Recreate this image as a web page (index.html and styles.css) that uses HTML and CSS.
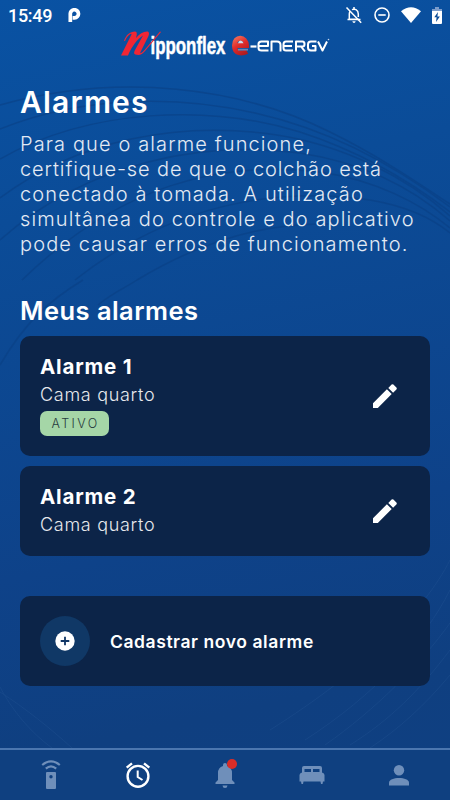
FILE: index.html
```html
<!DOCTYPE html>
<html lang="pt-BR">
<head>
  <meta charset="utf-8">
  <meta name="viewport" content="width=device-width, initial-scale=1">
  <title>Alarmes</title>
  <link rel="stylesheet" href="styles.css">
</head>
<body>
  <div class="app">
    <svg class="waves" viewBox="0 0 450 800" fill="none" aria-hidden="true">
      <g class="waves-dark">
        <path d="M0 105C120 72 240 87 330 132C385 159 425 188 450 204"/>
        <path d="M0 129C90 93 185 97 255 113C335 131 400 169 450 207"/>
        <path d="M0 159C90 108 210 104 300 132C365 153 415 185 450 212"/>
        <path d="M0 198C80 138 180 122 270 134C345 144 410 180 450 216"/>
        <path d="M0 240C90 160 205 141 300 153C365 163 415 190 450 221"/>
        <path d="M22 280C120 185 220 160 320 172C375 180 420 203 450 228"/>
        <path d="M75 280C170 205 275 186 370 200C405 206 432 218 450 233"/>
        <path d="M137 280C195 245 260 222 330 224"/>
        <path d="M0 365C25 322 50 300 83 280"/>
        <path d="M98 305C112 293 125 288 137 280"/>
      </g>
      <g class="waves-light">
        <path d="M450 560C425 610 365 670 270 730"/>
        <path d="M450 590C425 640 375 695 305 740"/>
        <path d="M450 623C420 665 375 710 325 745"/>
        <path d="M450 650C420 690 390 720 350 745"/>
        <path d="M450 675C425 705 400 728 370 748"/>
        <path d="M0 687C12 710 30 732 52 748"/>
        <path d="M0 692C25 708 50 728 72 748"/>
      </g>
    </svg>

    <header class="status-bar">
      <span class="clock">15:49</span>
      <svg class="pay" viewBox="0 0 14 16"><path d="M2.5 15V6.700A4.400 4.400 0 1 1 7 10.600H5" fill="none" stroke="#fff" stroke-width="4"/></svg>
      <div class="status-icons">
        <svg width="18" height="20" viewBox="0 0 18 20" fill="none" stroke="#fff" stroke-width="1.5">
          <path d="M5.2 6.1Q4.3 7.2 4.3 9V14.2H13.8M7 4.7Q9 3.6 11 4.7Q13.3 6 13.3 9V12M2.5 14.5H15.5"/>
          <path d="M9 2V4M1.5 2.5L16.2 17.8"/>
          <path d="M7.3 16.3H10.7Q10.3 18 9 18T7.3 16.3Z" fill="#fff" stroke="none"/>
        </svg>
        <svg width="16" height="16" viewBox="0 0 16 16" fill="none" stroke="#fff" stroke-width="1.6">
          <circle cx="8" cy="8" r="7"/><path d="M4.3 8H11.7"/>
        </svg>
        <svg width="20" height="16" viewBox="0 0 20 16"><path d="M0 4.2Q10-3.8 20 4.2L10 16Z" fill="#fff"/></svg>
        <svg width="10" height="17" viewBox="0 0 10 17">
          <path d="M3 0H7V2H10V4H0V2H3Z" fill="#7b9ccb"/>
          <path d="M0 4H10V16Q10 17 9 17H1Q0 17 0 16Z" fill="#fff"/>
          <path d="M6 5L2.3 10.2H4.6L4 15L7.9 9.4H5.4Z" fill="#0b4c98"/>
        </svg>
      </div>
    </header>

    <svg class="brand" viewBox="0 0 212 30" role="img" aria-label="Nipponflex e-energy">
      <defs>
        <linearGradient id="ball" gradientUnits="userSpaceOnUse" x1="114" y1="6" x2="126" y2="26">
          <stop offset="0" stop-color="#f4765f"/>
          <stop offset=".45" stop-color="#e02c2a"/>
          <stop offset="1" stop-color="#a3181e"/>
        </linearGradient>
      </defs>
      <text class="brand-name" x="30.500" y="23.500" textLength="75" lengthAdjust="spacingAndGlyphs">ipponflex</text>
      <path fill="#f12634" d="M4 11C6 5 10 1.500 15 1.500C17.500 1.500 17 5 16 8C19.500 4 23 1.500 27 1.500C29.500 1.500 29.500 4 28 7L20.500 22C19.800 24 21 23.500 24.500 20L40 1.500L41 2L25.500 20.500C22 25 19 25.500 15.500 24.500C13.500 24 14 22 15 20L23 5.500C17.500 9 12 16 8 25.500H1L11.500 4.500C12 2.500 8 4.500 5 11Z"/>
      <path d="M114.500 15.500H126.500C126 6 114.500 5.500 114.500 15.500C114.500 24 122 24 127 21.500" fill="none" stroke="url(#ball)" stroke-width="5"/>
      <path d="M118 13.300H123.500Q122.500 10.500 120.500 10.500T118 13.300Z" fill="#d2dbea"/>
      <path d="M118 18.800H128V20.500H118Z" fill="#6b87b6"/>
      <path d="M130.500 16.500H136.500" stroke="#fff" stroke-width="2.200"/>
      <g fill="none" stroke="#fff" stroke-width="2" stroke-linejoin="round">
        <path d="M148.500 20.500H141.500Q138.500 20.500 138.500 18V14Q138.500 11.500 141.500 11.500H148V16H139"/>
        <path d="M151.500 21.500V11.500H157Q160.500 11.500 160.500 15V21.500"/>
        <path d="M173 11.500H166Q163.500 11.500 163.500 14.500V18Q163.500 20.500 166 20.500H173M164 16H172"/>
        <path d="M176 21.500V11.500H182.500Q184.500 11.500 184.500 14T182.500 16.500H177M181 16.500L185 21.500"/>
        <path d="M196.500 11.500H191Q188 11.500 188 14.500V17.500Q188 20.500 191 20.500H195.500V16H192"/>
        <path d="M198 11.500L202.500 20.500L207 11.500"/>
      </g>
      <circle cx="208.500" cy="9.500" r=".8" fill="#c5d5eb"/>
    </svg>

    <main>
      <h1>Alarmes</h1>
      <p class="intro">
        <span class="line-1">Para que o alarme funcione,</span>
        <span class="line-2">certifique-se de que o colchão está</span>
        <span class="line-3">conectado à tomada. A utilização</span>
        <span class="line-4">simultânea do controle e do aplicativo</span>
        <span class="line-5">pode causar erros de funcionamento.</span>
      </p>

      <h2>Meus alarmes</h2>
      <div class="alarm-list">
        <article class="card alarm">
          <div>
            <h3>Alarme 1</h3>
            <p class="place">Cama quarto</p>
            <span class="badge">ATIVO</span>
          </div>
          <svg class="edit" viewBox="0 0 24 24"><path d="M0 19.200V24H4.800L18.700 10.100L13.900 5.300ZM15.300 3.900L20.100 8.700L23.400 5.400Q24.200 4.500 23.400 3.600L20.400.6Q19.500-.2 18.600.6Z"/></svg>
        </article>
        <article class="card alarm">
          <div>
            <h3>Alarme 2</h3>
            <p class="place">Cama quarto</p>
          </div>
          <svg class="edit" viewBox="0 0 24 24"><path d="M0 19.200V24H4.800L18.700 10.100L13.900 5.300ZM15.300 3.900L20.100 8.700L23.400 5.400Q24.200 4.500 23.400 3.600L20.400.6Q19.500-.2 18.600.6Z"/></svg>
        </article>
      </div>

      <div class="card new-alarm">
        <span class="plus">
          <svg viewBox="0 0 20 20"><circle cx="10" cy="10" r="9.700" fill="#fff"/><path d="M10 5.700V14.300M5.700 10H14.300" stroke="#103665" stroke-width="1.800"/></svg>
        </span>
        <span class="new-label">Cadastrar novo alarme</span>
      </div>
    </main>

    <nav class="tabs">
      <div class="tab">
        <svg width="20" height="30" viewBox="0 0 20 30">
          <path d="M1.200 5Q10-2.200 18.800 5M4.800 8.700Q10 4.200 15.200 8.700" fill="none" stroke="currentColor" stroke-width="2.200"/>
          <path fill="currentColor" fill-rule="evenodd" d="M6 12H14Q15 12 15 13V28Q15 29 14 29H6Q5 29 5 28V13Q5 12 6 12ZM10 15A1.700 1.700 0 1 0 10 18.400A1.700 1.700 0 1 0 10 15Z"/>
        </svg>
      </div>
      <div class="tab active">
        <svg width="26" height="26" viewBox="0 0 26 26" fill="none" stroke="currentColor" stroke-width="2.400">
          <circle cx="13" cy="14.300" r="10.400"/>
          <path d="M1.700 5.700L7 1.300M19 1.300L24.300 5.700"/>
          <path d="M12.700 8.500V15L17.500 18" stroke-width="2"/>
        </svg>
      </div>
      <div class="tab">
        <span class="bell">
          <svg width="20" height="25" viewBox="0 0 20 25" fill="currentColor">
            <path d="M10 0Q12 0 12 2V3Q17 4.500 17 10V17L19.500 19.500V21H.5V19.500L3 17V10Q3 4.500 8 3V2Q8 0 10 0ZM7.500 22.500H12.500Q12.300 25 10 25T7.500 22.500Z"/>
          </svg>
          <i class="dot"></i>
        </span>
      </div>
      <div class="tab">
        <svg width="26" height="20" viewBox="0 0 26 20" fill="currentColor">
          <path fill-rule="evenodd" d="M5 1H21Q23 1 23 3V7.500Q25.500 8 25.500 10V16.500H24L23.500 19H22L21.500 16.500H4.500L4 19H2.500L2 16.500H.5V10Q.5 8 3 7.500V3Q3 1 5 1ZM5.500 4V7H12V4ZM14 4V7H20.500V4Z"/>
        </svg>
      </div>
      <div class="tab">
        <svg width="20" height="21" viewBox="0 0 20 21" fill="currentColor">
          <circle cx="10" cy="5.300" r="5.200"/><path d="M0 20.500V17.800C0 11.500 20 11.500 20 17.800V20.500Z"/>
        </svg>
      </div>
    </nav>
  </div>
</body>
</html>
```

FILE: styles.css
```css
* {
  box-sizing: border-box;
  margin: 0;
  padding: 0;
}

body {
  background: #0f4081;
  color: #fff;
  font-family: Inter, sans-serif;
}

svg {
  display: block;
}

.app {
  position: relative;
  display: flex;
  flex-direction: column;
  width: 450px;
  height: 800px;
  overflow: hidden;
  background: linear-gradient(168deg, #0952a3 0%, #0b4c98 25%, #0e4289 65%, #0f3f80 85%, #0f4082 100%);
}

/* decorative lines behind the content */
.waves {
  position: absolute;
  inset: 0;
}

.waves-dark {
  stroke: #0a3f83;
  stroke-width: 1.5;
  opacity: .55;
}

.waves-light {
  stroke: #285998;
  opacity: .3;
}

.status-bar,
.brand,
main,
.tabs {
  position: relative;
}

.status-bar {
  display: flex;
  align-items: center;
  height: 30px;
  padding: 0 8px;
}

.clock {
  width: 60px;
  font-family: Roboto, sans-serif;
  font-size: 18px;
  font-weight: 500;
  letter-spacing: -.3px;
}

.pay {
  width: 13px;
  height: 15px;
}

.status-icons {
  display: flex;
  align-items: center;
  gap: 11px;
  margin-left: auto;
}

.brand {
  flex: none;
  width: 212px;
  height: 30px;
  margin-left: 120px;
}

.brand-name {
  fill: #fff;
  stroke: #fff;
  stroke-width: .5px;
  font-family: "Liberation Sans", sans-serif;
  font-size: 24px;
  font-weight: bold;
}

main {
  flex: 1;
  padding: 22px 20px 0;
}

h1 {
  font-size: 30px;
  font-weight: 600;
  letter-spacing: 1.2px;
  line-height: 40px;
}

.intro {
  margin-top: 10px;
  color: #e3eaf4;
  font-size: 20px;
  font-weight: 300;
  letter-spacing: 1.12px;
  line-height: 25px;
}

.intro span {
  display: block;
  white-space: nowrap;
}

.intro .line-2 {
  letter-spacing: .9px;
}

h2 {
  margin-top: 39px;
  font-size: 25.5px;
  font-weight: 600;
  letter-spacing: .45px;
  line-height: 30px;
}

.card {
  border-radius: 10px;
  background: #0c2448;
}

.alarm-list {
  display: flex;
  flex-direction: column;
  gap: 10px;
  margin-top: 10px;
}

.alarm {
  display: flex;
  align-items: center;
  justify-content: space-between;
  min-height: 90px;
  padding: 15px 33px 17px 20px;
}

.alarm:first-child {
  height: 120px;
  padding: 14px 33px 18px 20px;
}

.alarm .edit {
  margin-top: 2px;
}

.alarm:first-child .edit {
  margin-top: 4px;
}

h3 {
  font-size: 20.5px;
  font-weight: 700;
  letter-spacing: .8px;
  line-height: 29px;
}

.place {
  color: #e7e9ed;
  font-size: 18px;
  font-weight: 300;
  letter-spacing: .7px;
  line-height: 28px;
}

.badge {
  display: flex;
  align-items: center;
  justify-content: center;
  width: 69px;
  height: 25px;
  margin-top: 2px;
  padding-left: 2px;
  border-radius: 7px;
  background: #a5d6a7;
  color: #283d40;
  font-size: 12.5px;
  font-weight: 300;
  letter-spacing: 2.4px;
}

.edit {
  width: 24px;
  height: 24px;
  fill: #fff;
}

.new-alarm {
  display: flex;
  align-items: center;
  gap: 20px;
  height: 90px;
  margin-top: 40px;
  padding-left: 20px;
}

.plus {
  display: flex;
  align-items: center;
  justify-content: center;
  width: 50px;
  height: 50px;
  border-radius: 50%;
  background: #103866;
}

.plus svg {
  width: 20px;
  height: 20px;
}

.new-label {
  font-size: 17.5px;
  font-weight: 600;
  letter-spacing: .57px;
}

.tabs {
  display: flex;
  height: 52px;
  padding: 0 8px;
  border-top: 2px solid #4b76af;
  background: #0f4080;
}

.tab {
  display: flex;
  flex: 1;
  align-items: center;
  justify-content: center;
  color: #6f8fba;
}

.tab.active {
  color: #fff;
}

.bell {
  position: relative;
}

.dot {
  position: absolute;
  top: -4px;
  right: -2px;
  width: 10px;
  height: 10px;
  border-radius: 50%;
  background: #d92d28;
}
```
